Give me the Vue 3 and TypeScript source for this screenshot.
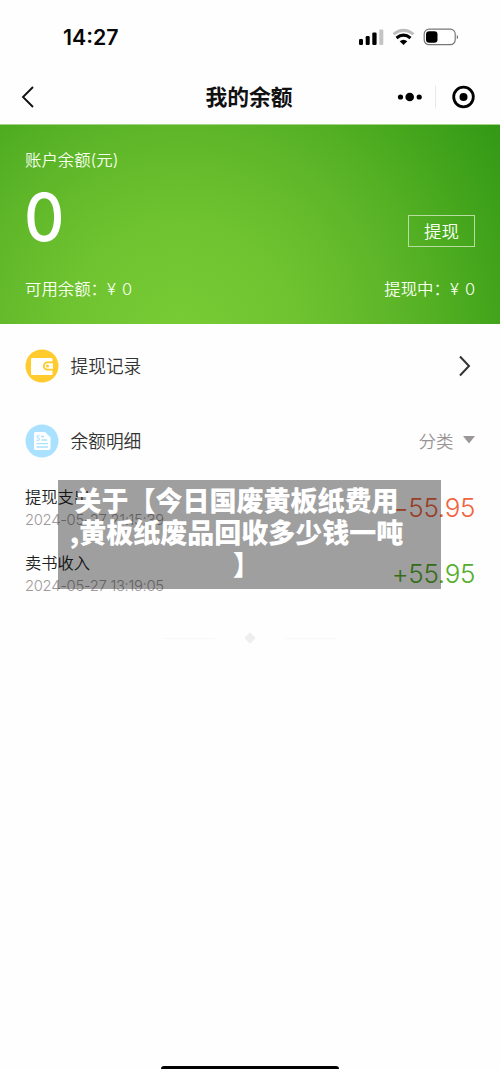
<script setup lang="ts">
interface BalanceEntry {
  title: string
  time: string
  amount: string
  kind: 'expense' | 'income'
}

const entries: BalanceEntry[] = [
  { title: '提现支出', time: '2024-05-27 21:15:39', amount: '−55.95', kind: 'expense' },
  { title: '卖书收入', time: '2024-05-27 13:19:05', amount: '+55.95', kind: 'income' },
]

const captionLines: string[] = ['关于【今日国废黄板纸费用', ',黄板纸废品回收多少钱一吨', '】']
</script>

<template>
  <main class="screen">
    <header class="status">
      <span class="clock">14:27</span>
      <svg class="status-icons" width="102" height="20" viewBox="0 0 102 20">
        <rect x="1" y="12" width="4" height="6" rx="1.2" />
        <rect x="7.700" y="9" width="4" height="9" rx="1.2" />
        <rect x="14.300" y="5.500" width="4.300" height="12.500" rx="1.200" />
        <rect x="21.300" y="2.500" width="4" height="15.500" rx="1.200" fill="#c4c4c4" />
        <path d="M35.500 7.200Q45.500 -.7 55.500 7.200" fill="none" stroke="#bdbdbd" stroke-width="2.700" />
        <path d="M38.500 11Q45.500 5.300 52.500 11" fill="none" stroke="#000" stroke-width="3" />
        <path d="M41.700 14.300Q45.500 11.300 49.300 14.300L45.500 17.900Z" />
        <rect x="66.200" y="2.200" width="31" height="15.500" rx="4.800" fill="#fff" stroke="#777" stroke-width="1.200" />
        <rect x="68" y="4.200" width="11.500" height="11.500" rx="3.200" />
        <path d="M98.800 7.700Q101.400 10 98.800 12.300Z" fill="#666" />
      </svg>
    </header>

    <nav class="navbar">
      <svg class="back" width="14" height="24" viewBox="0 0 14 24">
        <path d="M12 2L2 12L12 22" fill="none" stroke="#111" stroke-width="1.900" />
      </svg>
      <h1>我的余额</h1>
      <svg class="capsule" width="80" height="26" viewBox="0 0 80 26">
        <circle cx="3.500" cy="13" r="2.600" />
        <circle cx="12.700" cy="13" r="4.300" />
        <circle cx="22.200" cy="13" r="2.600" />
        <path d="M38.500 1.500V24.500" stroke="#e8e8e8" />
        <circle cx="66.500" cy="13" r="9.800" fill="none" stroke="#000" stroke-width="2.800" />
        <circle cx="66.500" cy="13" r="4" />
      </svg>
    </nav>

    <section class="balance">
      <div class="label">账户余额(元)</div>
      <div class="total">
        <strong>0</strong>
        <button>提现</button>
      </div>
      <div class="sums">
        <span>可用余额：<i>¥ 0</i></span>
        <span>提现中：<i>¥ 0</i></span>
      </div>
    </section>

    <section class="row">
      <svg width="34" height="34" viewBox="0 0 34 34">
        <circle cx="17" cy="17" r="16.500" fill="#ffcb2d" />
        <path d="M7 9H26.500Q27.500 9 27.500 10V12.500H22.500A4.500 4.500 0 0 0 22.500 21.500H27.500V25Q27.500 26 26.500 26H7Q6 26 6 25V10Q6 9 7 9Z" fill="#fff" />
        <path d="M28 13.800H22.500A3.200 3.200 0 0 0 22.500 20.200H28Z" fill="#fff" />
        <path d="M28 13.500H22.500A3.500 3.500 0 0 0 22.500 20.500H28" fill="none" stroke="#ffcb2d" stroke-width="1.600" />
        <circle cx="22.500" cy="17" r="1.600" fill="#ffcb2d" />
      </svg>
      <span class="row-name">提现记录</span>
      <svg class="next" width="12" height="22" viewBox="0 0 12 22">
        <path d="M1 1.500L10 11L1 20.500" fill="none" stroke="#333" stroke-width="2" />
      </svg>
    </section>

    <section class="row">
      <svg width="34" height="34" viewBox="0 0 34 34">
        <circle cx="17" cy="17" r="16.500" fill="#aae1ff" />
        <path d="M10.500 8H20L25.500 13.500V24Q25.500 26 23.500 26H10.500Q9 26 9 24.500V9.500Q9 8 10.500 8Z" fill="#fff" />
        <path d="M16 12.500H19M16.500 16H22M11.500 19.700H23M11.500 23H23" stroke="#aae1ff" stroke-width="1.300" />
        <path d="M14.500 11.700H12.200V14H14.200V16.300H11.700" fill="none" stroke="#aae1ff" stroke-width="1" />
      </svg>
      <span class="row-name">余额明细</span>
      <span class="filter">分类</span>
      <svg class="caret" width="12" height="8" viewBox="0 0 12 8"><path d="M0 0H12L6 7.500Z" fill="#9c9797" /></svg>
    </section>

    <section class="entries">
      <article v-for="entry in entries" :key="entry.time" class="entry">
        <div>
          <div class="entry-title">{{ entry.title }}</div>
          <time>{{ entry.time }}</time>
        </div>
        <span :class="['amount', entry.kind]">{{ entry.amount }}</span>
      </article>
    </section>

    <div class="end-mark"><span class="rule"></span><span class="diamond"></span><span class="rule"></span></div>

    <div class="caption">
      <div v-for="line in captionLines" :key="line" :class="{ closing: line === '】' }">{{ line }}</div>
    </div>
    <div class="home-bar"></div>
  </main>
</template>

<style>
body {
  margin: 0;
  background: #fefefe;
}
</style>

<style scoped>
.screen {
  position: relative;
  display: flex;
  flex-direction: column;
  box-sizing: border-box;
  width: 500px;
  height: 1069px;
  overflow: hidden;
  background: #fefefe;
  color: #333;
  font-family: Inter, "Noto Sans CJK SC", sans-serif;
  font-weight: 350;
}

.status {
  display: flex;
  justify-content: space-between;
  box-sizing: border-box;
  height: 70px;
  padding: 27px 40px 0 63px;
}

.clock {
  color: #080808;
  font-size: 21.300px;
  font-weight: 600;
  line-height: 21px;
}

.navbar {
  display: grid;
  grid-template-columns: 100px 1fr 100px;
  align-items: center;
  box-sizing: border-box;
  height: 54px;
  padding: 0 23px 0 21px;
}

.capsule {
  justify-self: end;
}

h1 {
  margin: 0;
  color: #111;
  font-size: 21.800px;
  font-weight: 600;
  line-height: 30px;
  text-align: center;
}

.balance {
  display: flex;
  flex-direction: column;
  box-sizing: border-box;
  height: 200px;
  padding: 23px 25px 0;
  border-top: 1px solid #a3d584;
  background: radial-gradient(circle 390px at 180px 215px, #78cc35 0%, #6fc330 30%, #5bb427 58%, #46a71d 78%, #319715 100%);
  background-origin: border-box;
  color: #f8fff0;
}

.label {
  font-size: 16.400px;
  line-height: 24px;
}

.total {
  display: flex;
  justify-content: space-between;
  height: 105px;
}

strong {
  margin-top: 11px;
  margin-left: -1px;
  color: #fff;
  font-size: 66px;
  font-weight: 500;
  line-height: 69px;
  transform: scaleX(0.950);
  transform-origin: 0 50%;
}

button {
  width: 67px;
  height: 32px;
  margin-top: 43px;
  padding: 0;
  border: 1px solid #b8dda0;
  background: transparent;
  color: #fafff5;
  font: 350 17.500px/28px "Noto Sans CJK SC", sans-serif;
}

.sums {
  display: flex;
  justify-content: space-between;
  margin-top: -1px;
  font-size: 16.400px;
  line-height: 26px;
}

i {
  font-style: normal;
  word-spacing: 1.500px;
}

.row {
  display: flex;
  align-items: center;
  height: 75px;
  padding: 0 25px 0 24.500px;
}

.balance + .row {
  margin-top: 4.500px;
}

.row-name {
  flex: 1;
  margin-top: 1px;
  margin-left: 12px;
  color: #333;
  font-size: 17.700px;
  line-height: 26px;
}

.next {
  margin-right: 4.500px;
}

.filter {
  margin-top: -1px;
  color: #999494;
  font-size: 17.500px;
}

.caret {
  margin-top: -2px;
  margin-left: 9.500px;
}

.entries {
  padding: 6px 25px 0;
}

.entry {
  display: flex;
  justify-content: space-between;
  height: 66px;
}

.entry-title {
  color: #222;
  font-size: 16.300px;
  line-height: 25px;
}

time {
  display: block;
  color: #9f9a9a;
  font-size: 14.800px;
  letter-spacing: -0.300px;
  line-height: 20px;
}

.amount {
  margin-top: 8px;
  font-size: 26px;
  letter-spacing: -0.350px;
  line-height: 30px;
}

.expense {
  color: #f26341;
}

.income {
  color: #54ad2b;
}

.end-mark {
  display: flex;
  align-items: center;
  justify-content: center;
  gap: 31px;
  height: 12px;
  margin-top: 15.500px;
}

.rule {
  width: 52px;
  height: 1px;
  background: #f8f8f8;
}

.diamond {
  width: 8px;
  height: 8px;
  background: #efeeee;
  transform: rotate(45deg);
}

.caption {
  position: absolute;
  top: 480px;
  left: 58px;
  box-sizing: border-box;
  width: 383px;
  height: 109px;
  padding: 4px 26px 0 0;
  background: rgba(0, 0, 0, 0.373);
  color: #fff;
  font-family: "Noto Sans CJK SC", sans-serif;
  font-size: 27px;
  font-weight: 900;
  line-height: 32px;
  text-align: center;
  white-space: nowrap;
}

.closing {
  padding-left: 20px;
}

.home-bar {
  position: absolute;
  bottom: -3px;
  left: 161px;
  width: 178px;
  height: 6px;
  border-radius: 3px;
  background: #000;
}
</style>
